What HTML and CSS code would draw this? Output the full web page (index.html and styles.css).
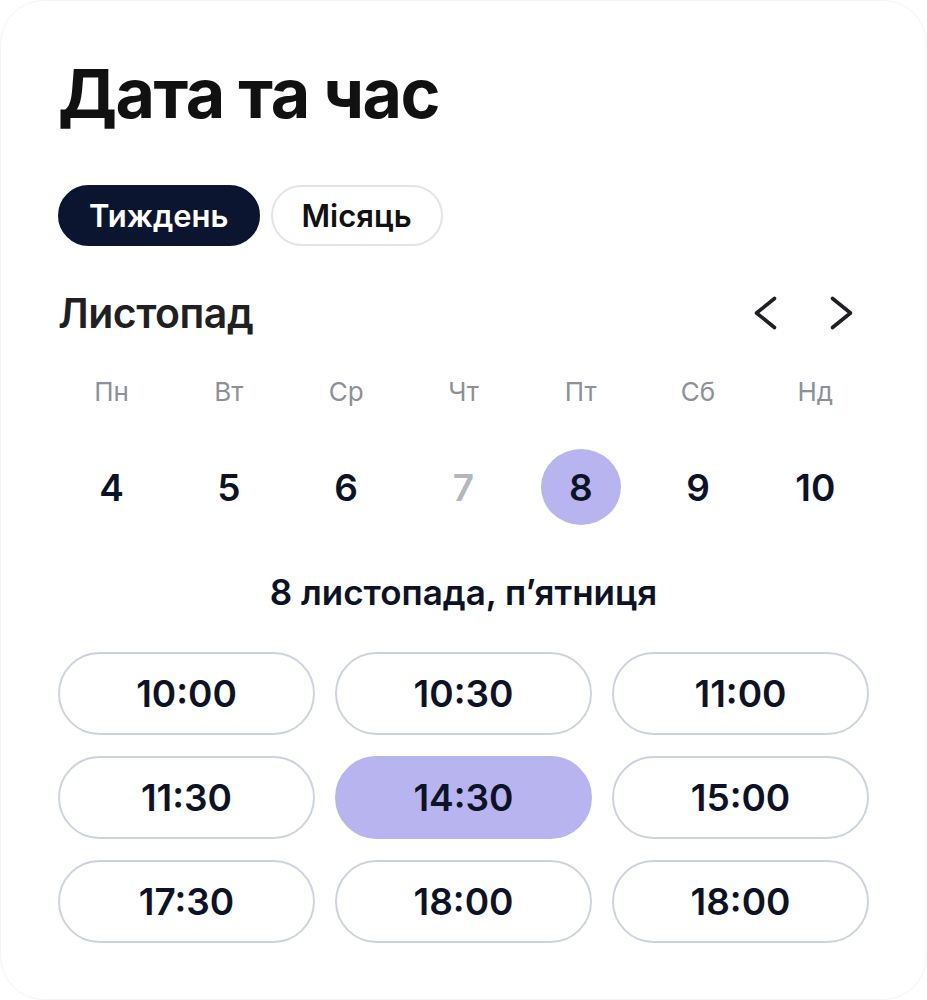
FILE: index.html
```html
<!DOCTYPE html>
<html lang="uk">
<head>
<meta charset="utf-8">
<title>Дата та час</title>
<link rel="stylesheet" href="styles.css">
</head>
<body>
<div class="card">
  <h1 class="title">Дата та час</h1>
  <div class="tabs">
    <button class="tab tab-active">Тиждень</button>
    <button class="tab">Місяць</button>
  </div>
  <div class="month-row">
    <div class="month">Листопад</div>
    <div class="nav">
      <button class="nav-btn" aria-label="Попередній">
        <svg viewBox="0 0 36 36" width="36" height="36"><polyline points="26.5,3.5 8.5,18 26.5,32.5" fill="none" stroke="#1f1f24" stroke-width="3.6" stroke-linecap="round" stroke-linejoin="round"/></svg>
      </button>
      <button class="nav-btn" aria-label="Наступний">
        <svg viewBox="0 0 36 36" width="36" height="36"><polyline points="9.5,3.5 27.5,18 9.5,32.5" fill="none" stroke="#1f1f24" stroke-width="3.6" stroke-linecap="round" stroke-linejoin="round"/></svg>
      </button>
    </div>
  </div>
  <div class="week">
    <div class="wd">Пн</div>
    <div class="wd">Вт</div>
    <div class="wd">Ср</div>
    <div class="wd">Чт</div>
    <div class="wd">Пт</div>
    <div class="wd">Сб</div>
    <div class="wd">Нд</div>
    <div class="day"><span>4</span></div>
    <div class="day"><span>5</span></div>
    <div class="day"><span>6</span></div>
    <div class="day day-off"><span>7</span></div>
    <div class="day day-sel"><span>8</span></div>
    <div class="day"><span>9</span></div>
    <div class="day"><span>10</span></div>
  </div>
  <div class="date-label">8 листопада, п’ятниця</div>
  <div class="slots">
    <button class="slot">10:00</button>
    <button class="slot">10:30</button>
    <button class="slot">11:00</button>
    <button class="slot">11:30</button>
    <button class="slot slot-sel">14:30</button>
    <button class="slot">15:00</button>
    <button class="slot">17:30</button>
    <button class="slot">18:00</button>
    <button class="slot">18:00</button>
  </div>
</div>
</body>
</html>
```

FILE: styles.css
```css
* { box-sizing: border-box; }
html, body { margin: 0; padding: 0; background: #ffffff; }
body { font-family: Inter, "Noto Sans", sans-serif; color: #0d1326; }
button { font-family: inherit; border: none; background: none; padding: 0; margin: 0; cursor: pointer; color: inherit; }

.card {
  width: 927px;
  height: 1000px;
  border: 1.5px solid #f3f3f3;
  border-radius: 44px;
  padding: 0 57px;
  display: flex;
  flex-direction: column;
  background: #fff;
}

.title {
  margin: 57px 0 0;
  font-size: 68px;
  line-height: 70px;
  font-weight: 700;
  letter-spacing: -1.5px;
  color: #111111;
}

.tabs {
  display: flex;
  gap: 11px;
  margin-top: 57px;
}
.tab {
  height: 61px;
  padding: 0 29px;
  border-radius: 31px;
  font-size: 31px;
  font-weight: 600;
  color: #111;
  border: 2px solid #e4e4e4;
  background: #fff;
}
.tab-active {
  background: #0b1530;
  border-color: #0b1530;
  color: #ffffff;
}

.month-row {
  display: flex;
  align-items: center;
  justify-content: space-between;
  margin-top: 45px;
  height: 44px;
}
.month {
  font-size: 41px;
  font-weight: 600;
  color: #1f1f24;
  letter-spacing: -0.5px;
}
.nav { display: flex; gap: 39px; margin-right: 10px; }
.nav-btn { width: 36px; height: 36px; display: flex; }

.week {
  display: grid;
  grid-template-columns: repeat(7, 1fr);
  margin: 37px -5px 0;
  row-gap: 37px;
}
.wd {
  text-align: center;
  font-size: 26px;
  line-height: 40px;
  color: #8c9098;
  font-weight: 400;
}
.day {
  display: flex;
  justify-content: center;
}
.day span {
  width: 80px;
  height: 76px;
  border-radius: 50%;
  display: flex;
  align-items: center;
  justify-content: center;
  font-size: 37px;
  font-weight: 600;
  color: #0d1326;
}
.day-off span { color: #b3b6bd; }
.day-sel span { background: #b8b4f0; }

.date-label {
  margin-top: 46px;
  text-align: center;
  font-size: 35px;
  line-height: 42px;
  font-weight: 600;
  letter-spacing: 0;
  color: #0d1326;
}

.slots {
  display: grid;
  grid-template-columns: repeat(3, 1fr);
  column-gap: 20px;
  row-gap: 21px;
  margin-top: 39px;
}
.slot {
  height: 83px;
  border: 2px solid #ccd3de;
  border-radius: 42px;
  font-size: 37px;
  font-weight: 600;
  color: #0d1326;
  background: #fff;
}
.slot-sel {
  background: #b8b4f0;
  border-color: #b8b4f0;
}
```
